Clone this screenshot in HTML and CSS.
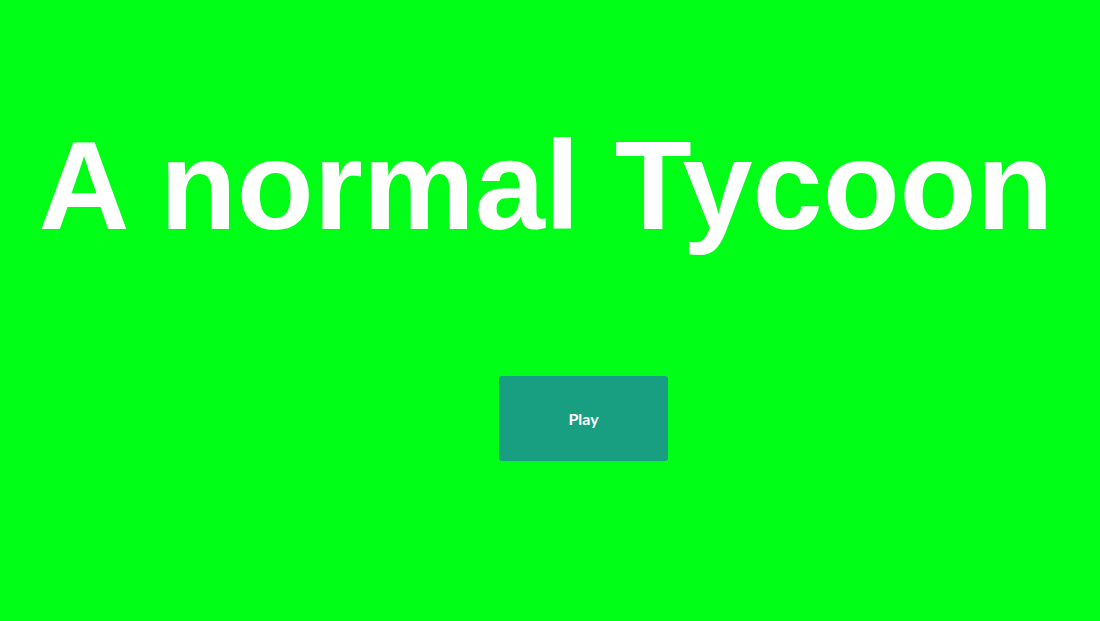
FILE: index.html
```html
<!DOCTYPE html>
<html lang="en">

<head>
    <meta charset="UTF-8">
    <meta name="viewport" content="width=device-width, initial-scale=1.0">
    <title>A normal Tycoon</title>
    <link rel="stylesheet" href="styles.css">
</head>

<body>
    <div class="container">
        <h1 class="title">A normal Tycoon</h1>

        <div class="menu">
            <button class="play-btn">Play</button>
        </div>
    </div>
</body>

</html>
```

FILE: styles.css
```css
* {
    box-sizing: border-box;
}

html,
body {
    height: 100%;
}

body {
    margin: 0;
    background-color: #00ff16;
    font-family: "Liberation Sans", Arial, sans-serif;
    overflow: hidden;
}

.container {
    padding-top: 110px;
}

.title {
    margin: 0;
    padding-right: 8px;
    text-align: center;
    color: #fff;
    font-size: 126px;
    font-weight: bold;
    line-height: 1.2;
}

.menu {
    padding-top: 115px;
    padding-left: 499px;
}

.play-btn {
    width: 169px;
    height: 85px;
    border: none;
    border-radius: 3px;
    background-color: #189e80;
    color: #fff;
    font-family: Lato, sans-serif;
    font-weight: bold;
    font-size: 16px;
    cursor: pointer;
}
```
